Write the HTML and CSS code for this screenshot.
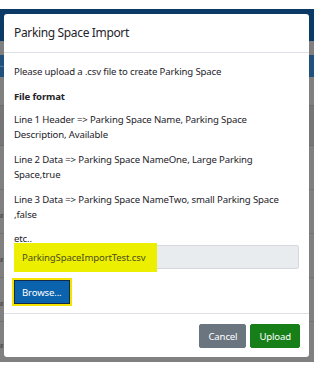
FILE: index.html
```html
<!DOCTYPE html>
<html lang="en">
<head>
<meta charset="utf-8">
<title>Parking Space Import</title>
<link rel="stylesheet" href="styles.css">
</head>
<body>
<div class="screen">
  <div class="page">
    <div class="top-gap"></div>
    <div class="navbar"></div>
    <div class="strip"></div>
    <div class="toolbar"><span class="tool-icon">&#8656;</span></div>
    <div class="filler"></div>
    <div class="table-head"></div>
    <div class="table-row"></div>
    <div class="table-row"><span class="cut">g</span></div>
    <div class="table-row"><span class="cut">g</span></div>
    <div class="table-row"><span class="cut">g</span></div>
    <div class="table-row last"><span class="cut">g</span></div>
    <div class="bottom-gap"></div>
  </div>

  <div class="modal">
    <div class="modal-header">
      <h5 class="modal-title">Parking Space Import</h5>
    </div>
    <div class="modal-body">
      <p class="intro">Please upload a .csv file to create Parking Space</p>
      <p class="label">File format</p>
      <p class="fmt">Line 1 Header =&gt; Parking Space Name, Parking Space Description, Available</p>
      <p class="fmt">Line 2 Data =&gt; Parking Space NameOne, Large Parking Space,true</p>
      <p class="fmt">Line 3 Data =&gt; Parking Space NameTwo, small Parking Space ,false</p>
      <p class="etc">etc..</p>
      <div class="file-input">
        <span class="highlight"></span>
        <span class="file-name">ParkingSpaceImportTest.csv</span>
      </div>
      <div class="browse-mark">
        <button class="btn btn-browse" type="button">Browse...</button>
      </div>
    </div>
    <div class="modal-footer">
      <button class="btn btn-cancel" type="button">Cancel</button>
      <button class="btn btn-upload" type="button">Upload</button>
    </div>
  </div>
</div>
</body>
</html>
```

FILE: styles.css
```css
html, body {
  margin: 0;
  padding: 0;
  background: #ffffff;
}

.screen {
  position: relative;
  width: 314px;
  height: 378px;
  overflow: hidden;
}

/* dimmed page behind the dialog */
.page {
  display: flex;
  flex-direction: column;
  height: 378px;
}

.top-gap { height: 9px; background: #ffffff; }
.navbar { height: 32px; background: #0b3a66; }
.strip { height: 14px; background: #7f7f7f; }
.toolbar {
  height: 22px;
  background: #22507c;
  display: flex;
  align-items: center;
}
.tool-icon {
  font-family: "DejaVu Sans", sans-serif;
  font-size: 5px;
  line-height: 5px;
  color: #6f8faf;
}
.filler { height: 28px; background: #808080; border-bottom: 1px solid #6d6d6d; }
.table-head { height: 39px; background: #767676; border-bottom: 1px solid #6d6d6d; }
.table-row {
  height: 44px;
  background: #808080;
  border-bottom: 1px solid #747474;
  display: flex;
  align-items: center;
  padding-top: 6px;
  box-sizing: border-box;
}
.table-row.last { height: 40px; border-bottom: 0; }
.cut {
  font-family: "Open Sans", sans-serif;
  font-size: 6px;
  line-height: 8px;
  color: #3c3c3c;
}
.bottom-gap { flex: 1; background: #ffffff; }

/* dialog */
.modal {
  position: absolute;
  left: 4px;
  top: 14px;
  width: 305px;
  background: #ffffff;
  border-radius: 3px;
  font-family: "Noto Sans", "Open Sans", sans-serif;
  color: #24232a;
  font-size: 9.6px;
  letter-spacing: -0.15px;
}

.modal-header {
  height: 39px;
  box-sizing: border-box;
  padding: 0 10px;
  display: flex;
  align-items: center;
  border-bottom: 1px solid #dee2e6;
}

.modal-title {
  margin: 0;
  font-size: 12px;
  font-weight: 400;
  line-height: 18px;
  letter-spacing: -0.35px;
}

.modal-body {
  padding: 11px 10px 7px;
  display: flex;
  flex-direction: column;
  align-items: flex-start;
}

.modal-body p {
  margin: 0;
  line-height: 15px;
}
.intro { margin-bottom: 10px !important; }
.label { font-weight: 700; margin-bottom: 8px !important; }
.fmt { margin-bottom: 10px !important; }
.etc { line-height: 13px !important; }

.file-input {
  position: relative;
  align-self: stretch;
  height: 24px;
  box-sizing: border-box;
  background: #e9ecef;
  border: 1px solid #d5d9de;
  border-radius: 2px;
  display: flex;
  align-items: center;
  padding-left: 7px;
}
.highlight {
  position: absolute;
  left: -1px;
  top: -3px;
  width: 143px;
  height: 29px;
  background: #ecf000;
}
.file-name {
  position: relative;
  color: #4e4d1c;
}

.browse-mark {
  margin-top: 9px;
  margin-left: -2px;
  border: 2px solid #f4e200;
  display: flex;
}

.btn {
  font-family: "Noto Sans", "Open Sans", sans-serif;
  font-size: 9.6px;
  letter-spacing: -0.15px;
  color: #ffffff;
  height: 24px;
  box-sizing: border-box;
  border-radius: 2px;
  margin: 0;
  cursor: pointer;
}

.btn-browse {
  background: #0c63ad;
  border: 1px solid #122a4c;
  border-radius: 0;
  padding: 0 7px;
}

.modal-footer {
  border-top: 1px solid #dee2e6;
  padding: 10px 9px 9px;
  display: flex;
  justify-content: flex-end;
  gap: 4px;
}

.btn-cancel {
  background: #6b7580;
  border: 1px solid #6b7580;
  padding: 0 8px;
}

.btn-upload {
  background: #177f18;
  border: 1px solid #177f18;
  padding: 0 8px;
}
```
